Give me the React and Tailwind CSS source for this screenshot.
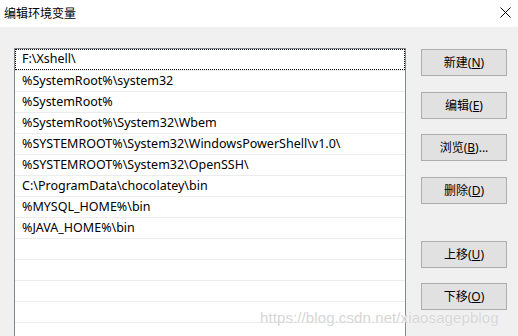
import React from 'react';

const paths = [
  'F:\\Xshell\\',
  '%SystemRoot%\\system32',
  '%SystemRoot%',
  '%SystemRoot%\\System32\\Wbem',
  '%SYSTEMROOT%\\System32\\WindowsPowerShell\\v1.0\\',
  '%SYSTEMROOT%\\System32\\OpenSSH\\',
  'C:\\ProgramData\\chocolatey\\bin',
  '%MYSQL_HOME%\\bin',
  '%JAVA_HOME%\\bin',
  '', '', '', '', '',
];

function Btn({ label, hot, tail = '', className = '' }) {
  return (
    <div className={`h-[27px] w-[86px] border border-[#adadad] bg-[#e1e1e1] flex items-center justify-center text-[12px] text-black ${className}`}>
      <span>
        {label}(<u>{hot}</u>){tail}
      </span>
    </div>
  );
}

export default function App() {
  return (
    <div
      className="relative w-[518px] h-[336px] overflow-hidden bg-[#f0f0f0]"
      style={{ fontFamily: '"Noto Sans", "Noto Sans CJK SC", sans-serif' }}
    >
      {/* title bar */}
      <div className="h-[27px] bg-white flex items-center justify-between pl-[4px] pr-[7px]">
        <span className="text-[12px] text-black leading-none">编辑环境变量</span>
        <svg width="11" height="11" viewBox="0 0 11 11" className="mb-[2px]">
          <path d="M0.5 0.5 L10.5 10.5 M10.5 0.5 L0.5 10.5" stroke="#000" strokeWidth="1" />
        </svg>
      </div>

      <div className="flex pl-[14px] pt-[21px]">
        {/* list */}
        <div className="w-[392px] h-[300px] bg-white border-l border-t border-r border-[#828790]">
          {paths.map((p, i) => (
            <div
              key={i}
              className={`h-[21px] flex items-center text-[12.5px] text-black whitespace-nowrap ${
                i === 0 ? 'pl-[6px] border border-dotted border-black' : 'pl-[7px] border-t border-[#ececec]'
              }`}
            >
              {p}
            </div>
          ))}
        </div>

        {/* buttons */}
        <div className="ml-[15px] flex flex-col">
          <Btn label="新建" hot="N" className="mt-[1px]" />
          <Btn label="编辑" hot="E" className="mt-[16px]" />
          <Btn label="浏览" hot="B" tail="..." className="mt-[15px]" />
          <Btn label="删除" hot="D" className="mt-[16px]" />
          <Btn label="上移" hot="U" className="mt-[37px]" />
          <Btn label="下移" hot="O" className="mt-[15px]" />
        </div>
      </div>

      {/* watermark */}
      <div
        className="absolute left-[260px] top-[307px] text-[15px] text-[#d6d6d6] tracking-[0.1px] whitespace-nowrap"
        style={{ fontFamily: '"Liberation Sans", sans-serif', textShadow: '0 0 1px #fff' }}
      >
        https://blog.csdn.net/xiaosagepblog
      </div>
    </div>
  );
}
